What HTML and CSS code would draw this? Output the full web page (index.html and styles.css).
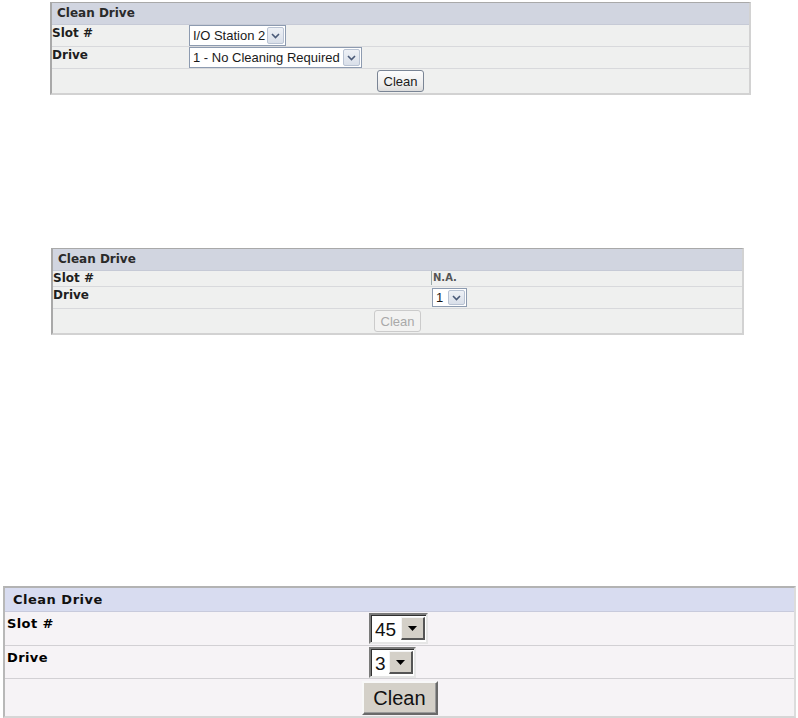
FILE: index.html
```html
<!DOCTYPE html>
<html>
<head>
<meta charset="utf-8">
<link rel="stylesheet" href="styles.css">
</head>
<body>
<div class="panel p1">
  <div class="hdr">Clean Drive</div>
  <div class="row r1">
    <div class="lbl">Slot #</div>
    <div class="val"><span class="sel xp w96"><span class="txt">I/O Station 2</span><span class="arr"><svg width="9" height="6" viewBox="0 0 9 6"><path d="M1 1 L4.5 4.5 L8 1" fill="none" stroke="#4a5a78" stroke-width="1.6"/></svg></span></span></div>
  </div>
  <div class="row r2">
    <div class="lbl">Drive</div>
    <div class="val"><span class="sel xp w172"><span class="txt">1 - No Cleaning Required</span><span class="arr"><svg width="9" height="6" viewBox="0 0 9 6"><path d="M1 1 L4.5 4.5 L8 1" fill="none" stroke="#4a5a78" stroke-width="1.6"/></svg></span></span></div>
  </div>
  <div class="row r3 act">
    <button class="btn xpbtn">Clean</button>
  </div>
</div>

<div class="panel p2">
  <div class="hdr">Clean Drive</div>
  <div class="row r1">
    <div class="lbl">Slot #</div>
    <div class="val"><span class="na">N.A.</span></div>
  </div>
  <div class="row r2">
    <div class="lbl">Drive</div>
    <div class="val"><span class="sel xp small w34"><span class="txt">1</span><span class="arr"><svg width="9" height="6" viewBox="0 0 9 6"><path d="M1 1 L4.5 4.5 L8 1" fill="none" stroke="#4a5a78" stroke-width="1.6"/></svg></span></span></div>
  </div>
  <div class="row r3 act">
    <button class="btn xpbtn dis" disabled>Clean</button>
  </div>
</div>

<div class="panel p3">
  <div class="hdr">Clean Drive</div>
  <div class="row r1">
    <div class="lbl">Slot #</div>
    <div class="val"><span class="sel classic w58"><span class="txt">45</span><span class="arr"><svg width="9" height="5" viewBox="0 0 9 5"><path d="M0 0 H9 L4.5 5 Z" fill="#000"/></svg></span></span></div>
  </div>
  <div class="row r2">
    <div class="lbl">Drive</div>
    <div class="val"><span class="sel classic w46"><span class="txt">3</span><span class="arr"><svg width="9" height="5" viewBox="0 0 9 5"><path d="M0 0 H9 L4.5 5 Z" fill="#000"/></svg></span></span></div>
  </div>
  <div class="row r3 act">
    <button class="btn clbtn">Clean</button>
  </div>
</div>
</body>
</html>
```
FILE: styles.css
```css
html, body {
  margin: 0;
  padding: 0;
  background: #ffffff;
}
body {
  font-family: "DejaVu Sans", Verdana, sans-serif;
  color: #222;
}

.panel {
  box-sizing: border-box;
}

.row {
  display: grid;
  align-items: start;
  box-sizing: border-box;
}
.row.act {
  display: flex;
  justify-content: center;
  align-items: flex-start;
}

.lbl {
  font-weight: bold;
  white-space: nowrap;
}

.val {
  display: flex;
  align-items: flex-start;
}

/* ---------- panel 1 ---------- */
.p1 {
  margin: 2px 0 0 50px;
  width: 701px;
  border-top: 1px solid #a9a9a9;
  border-left: 2px solid #a9a9a9;
  border-right: 2px solid #d2d2d2;
  border-bottom: 2px solid #d2d2d2;
  background: #eff0ef;
}
.p1 .hdr,
.p2 .hdr {
  height: 21px;
  line-height: 21px;
  padding-left: 5px;
  background: #d1d5e0;
  font-size: 12px;
  font-weight: bold;
  color: #2a2a2a;
  border-bottom: 1px solid #c6cad6;
}
.p1 .row,
.p2 .row {
  grid-template-columns: 137px 1fr;
  font-size: 12px;
  border-top: 1px solid #d8d9dc;
}
.p1 .row:nth-child(2),
.p2 .row:nth-child(2) {
  border-top: none;
}
.p1 .lbl,
.p2 .lbl {
  line-height: 15px;
  padding-top: 1px;
  color: #1e1e1e;
}
.p1 .r1 { height: 21px; }
.p1 .r2 { height: 22px; }
.p1 .r3 { height: 25px; padding-top: 1px; }

/* ---------- panel 2 ---------- */
.p2 {
  margin: 153px 0 0 51px;
  width: 693px;
  border-top: 1px solid #a9a9a9;
  border-left: 2px solid #a9a9a9;
  border-right: 2px solid #d2d2d2;
  border-bottom: 2px solid #d2d2d2;
  background: #eff0ef;
}
.p2 .row {
  grid-template-columns: 379px 1fr;
}
.p2 .lbl {
  line-height: 14px;
  padding-top: 0;
}
.p2 .r1 { height: 15px; }
.p2 .r2 { height: 22px; padding-top: 1px; }
.p2 .r3 { height: 25px; padding-top: 1px; }
.na {
  font-size: 10px;
  line-height: 14px;
  font-weight: bold;
  color: #555;
  border-left: 1px solid #9aa;
  padding-left: 1px;
  margin-left: -1px;
}

/* ---------- panel 3 ---------- */
.p3 {
  margin: 251px 0 0 3px;
  width: 793px;
  border-top: 2px solid #b3b3b3;
  border-left: 2px solid #b8b8b8;
  border-right: 2px solid #dcdcdc;
  border-bottom: 2px solid #d6d6d6;
  background: #f6f3f6;
}
.p3 .hdr {
  height: 23px;
  line-height: 24px;
  padding-left: 8px;
  background: #d8dcf0;
  font-size: 13px;
  font-weight: bold;
  letter-spacing: 0.5px;
  color: #111;
  border-bottom: 1px solid #c8cadc;
}
.p3 .row {
  grid-template-columns: 364px 1fr;
  border-top: 1px solid #d2d0d4;
  font-size: 13px;
}
.p3 .row:nth-child(2) {
  border-top: none;
}
.p3 .lbl {
  letter-spacing: 0.4px;
  line-height: 16px;
  padding-top: 3px;
  padding-left: 2px;
  color: #000;
}
.p3 .r1 { height: 33px; padding-top: 1px; }
.p3 .r2 { height: 33px; padding-top: 1px; }
.p3 .r3 { height: 38px; padding-top: 2px; }

/* ---------- select boxes ---------- */
.sel {
  display: inline-flex;
  box-sizing: border-box;
  background: #fff;
}
.sel .txt {
  flex: 1;
  white-space: nowrap;
  overflow: hidden;
}
.sel.xp {
  height: 21px;
  border: 1px solid #8d9bb0;
  font-family: "Liberation Sans", Arial, sans-serif;
  font-size: 13px;
  line-height: 19px;
  color: #1a1a1a;
}
.sel.xp .txt {
  padding-left: 3px;
}
.sel.xp .arr {
  box-sizing: border-box;
  width: 17px;
  margin: 1px;
  border: 1px solid #b9c3d3;
  border-radius: 2px;
  background: linear-gradient(#eef1f6, #d9dfe9);
  display: flex;
  align-items: center;
  justify-content: center;
}
.sel.xp.small {
  height: 19px;
  line-height: 17px;
}
.w96 { width: 97px; }
.w172 { width: 173px; }
.w34 { width: 35px; }

.sel.classic {
  border-top: 2px solid #7a7a7a;
  border-left: 2px solid #7a7a7a;
  border-right: 2px solid #e6e6e6;
  border-bottom: 2px solid #e6e6e6;
  box-shadow: inset 1px 1px 0 #303030;
  font-family: "Liberation Sans", Arial, sans-serif;
  font-size: 19px;
  color: #111;
}
.sel.classic .txt {
  padding-left: 4px;
  padding-top: 1px;
  line-height: 27px;
}
.sel.classic .arr {
  box-sizing: border-box;
  width: 24px;
  margin: 2px 1px 2px 0;
  background: #d4d0c8;
  border-top: 1px solid #f4f4f4;
  border-left: 1px solid #f4f4f4;
  border-right: 2px solid #555;
  border-bottom: 2px solid #555;
  display: flex;
  align-items: center;
  justify-content: center;
}
.w58 { width: 59px; height: 31px; }
.w46 { width: 47px; height: 31px; }

/* ---------- buttons ---------- */
.btn {
  margin: 0;
  padding: 0;
  cursor: default;
}
.xpbtn {
  width: 47px;
  height: 22px;
  border: 1px solid #7a8595;
  border-radius: 3px;
  background: linear-gradient(#fdfdfd, #ececec 70%, #dcdcdc);
  font-family: "Liberation Sans", Arial, sans-serif;
  font-size: 13px;
  color: #1a1a1a;
}
.xpbtn.dis {
  border-color: #cbcbcb;
  background: #f2f2f1;
  color: #a9a9a9;
}
.clbtn {
  width: 76px;
  height: 34px;
  background: #d4d0c8;
  border-top: 2px solid #f8f8f8;
  border-left: 2px solid #f8f8f8;
  border-right: 2px solid #6a6a6a;
  border-bottom: 2px solid #6a6a6a;
  box-shadow: inset -1px -1px 0 #9a9a9a;
  font-family: "Liberation Sans", Arial, sans-serif;
  font-size: 20px;
  color: #111;
}
```
